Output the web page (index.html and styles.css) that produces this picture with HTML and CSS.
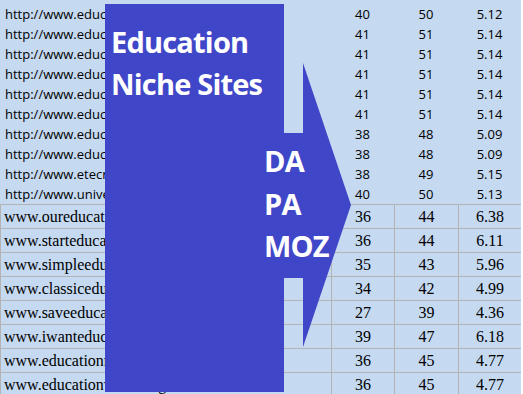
FILE: index.html
```html
<!DOCTYPE html>
<html>
<head>
<meta charset="utf-8">
<link rel="stylesheet" href="styles.css">
</head>
<body>
<div class="sheet">
  <div class="top">
    <div class="url">http://www.educationsite.com</div><div class="num">40</div><div class="num">50</div><div class="num">5.12</div>
    <div class="url">http://www.educationweb.com</div><div class="num">41</div><div class="num">51</div><div class="num">5.14</div>
    <div class="url">http://www.educationweb.net</div><div class="num">41</div><div class="num">51</div><div class="num">5.14</div>
    <div class="url">http://www.educationweb.org</div><div class="num">41</div><div class="num">51</div><div class="num">5.14</div>
    <div class="url">http://www.educationweb.info</div><div class="num">41</div><div class="num">51</div><div class="num">5.14</div>
    <div class="url">http://www.educationweb.us</div><div class="num">41</div><div class="num">51</div><div class="num">5.14</div>
    <div class="url">http://www.educationhub.com</div><div class="num">38</div><div class="num">48</div><div class="num">5.09</div>
    <div class="url">http://www.educationhub.net</div><div class="num">38</div><div class="num">48</div><div class="num">5.09</div>
    <div class="url">http://www.etecnology.com</div><div class="num">38</div><div class="num">49</div><div class="num">5.15</div>
    <div class="url">http://www.universitynet.com</div><div class="num">40</div><div class="num">50</div><div class="num">5.13</div>
  </div>
  <div class="bottom">
    <div class="cell url">www.oureducation.org</div><div class="cell num">36</div><div class="cell num">44</div><div class="cell num">6.38</div>
    <div class="cell url">www.starteducation.org</div><div class="cell num">36</div><div class="cell num">44</div><div class="cell num">6.11</div>
    <div class="cell url">www.simpleeducation.com</div><div class="cell num">35</div><div class="cell num">43</div><div class="cell num">5.96</div>
    <div class="cell url">www.classiceducation.net</div><div class="cell num">34</div><div class="cell num">42</div><div class="cell num">4.99</div>
    <div class="cell url">www.saveeducation.com</div><div class="cell num">27</div><div class="cell num">39</div><div class="cell num">4.36</div>
    <div class="cell url">www.iwanteducation.com</div><div class="cell num">39</div><div class="cell num">47</div><div class="cell num">6.18</div>
    <div class="cell url">www.educationmedia.net</div><div class="cell num">36</div><div class="cell num">45</div><div class="cell num">4.77</div>
    <div class="cell url">www.educationworld.org</div><div class="cell num">36</div><div class="cell num">45</div><div class="cell num">4.77</div>
  </div>
</div>
<div class="overlay">
  <svg class="shape" width="523" height="394" viewBox="0 0 523 394">
    <polygon points="105,4 284,4 284,133 303,133 303,63 351,205 303,347 303,278 284,278 284,392 105,392" fill="#3f46c8"/>
  </svg>
  <div class="title">Education<br>Niche Sites</div>
  <div class="metrics">DA<br>PA<br>MOZ</div>
</div>
</body>
</html>
```
FILE: styles.css
```css
html, body {
  margin: 0;
  padding: 0;
  background: #ffffff;
  overflow: hidden;
}
body {
  width: 523px;
  height: 394px;
  position: relative;
}
.sheet {
  width: 521px;
  background: #c5d9f1;
  color: #000;
}
.top {
  padding-top: 4px;
  display: grid;
  grid-template-columns: 331px 63px 64px 63px;
  grid-auto-rows: 20px;
  font-family: "Open Sans", "Noto Sans", sans-serif;
  font-size: 13px;
  line-height: 20px;
  color: #000;
}
.top .url {
  padding-left: 5px;
  white-space: nowrap;
  overflow: hidden;
}
.num {
  text-align: center;
}
.bottom {
  display: grid;
  grid-template-columns: 330px 62px 63px 62px;
  grid-auto-rows: 23px;
  gap: 1px;
  padding: 1px 0 0 1px;
  background: #b3b3b3;
  font-family: "Liberation Serif", "Times New Roman", serif;
  font-size: 16px;
  line-height: 23px;
}
.cell {
  background: #c5d9f1;
  white-space: nowrap;
}
.bottom .url {
  padding-left: 3px;
}
.overlay {
  position: absolute;
  left: 0;
  top: 0;
  width: 523px;
  height: 394px;
}
.shape {
  position: absolute;
  left: 0;
  top: 0;
  display: block;
}
.title {
  position: absolute;
  left: 111px;
  top: 21px;
  color: #ffffff;
  font-family: "Open Sans", "Noto Sans", sans-serif;
  font-weight: 700;
  font-size: 29px;
  letter-spacing: -0.8px;
  line-height: 41.5px;
  white-space: nowrap;
}
.metrics {
  position: absolute;
  left: 264px;
  top: 140px;
  color: #ffffff;
  font-family: "Open Sans", "Noto Sans", sans-serif;
  font-weight: 700;
  font-size: 29px;
  letter-spacing: -0.8px;
  line-height: 42.5px;
  white-space: nowrap;
}
```
